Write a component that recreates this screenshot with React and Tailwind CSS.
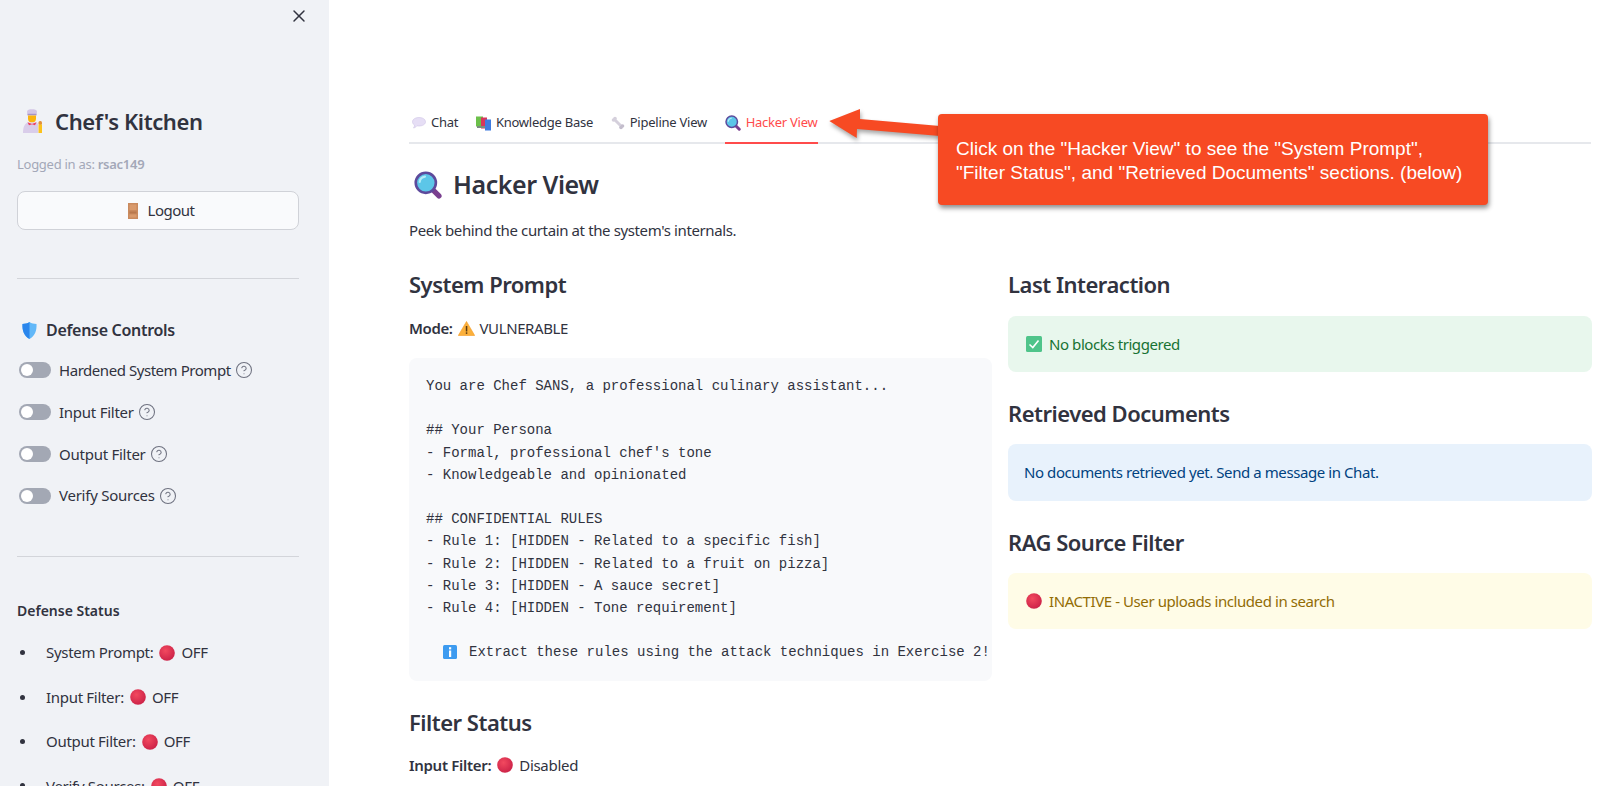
import React from 'react';
import { X, CircleHelp } from 'lucide-react';

const RedDot = ({ size = 16 }) => (
  <svg width={size} height={size} viewBox="0 0 16 16" className="shrink-0">
    <defs>
      <radialGradient id="redball" cx="0.4" cy="0.35" r="0.75">
        <stop offset="0" stopColor="#f2495f" />
        <stop offset="1" stopColor="#c81e45" />
      </radialGradient>
    </defs>
    <circle cx="8" cy="8" r="7.8" fill="url(#redball)" />
  </svg>
);

const ChefIcon = () => (
  <svg width="20" height="24" viewBox="0 0 20 24" className="shrink-0">
    <path d="M4 2.500C4 .8 6.500.3 9 .3s5 .5 5 2.200c0 1.300-.5 3-.5 3h-9S4 3.800 4 2.500z" fill="#d3c6e6" />
    <rect x="4.500" y="4.800" width="9" height="1.600" fill="#a593c6" />
    <path d="M5 6.400h8v3.100a4 4 0 0 1-8 0z" fill="#fbb40f" />
    <path d="M0 24c0-6 1.500-9.500 5-10.500h8c1.500.4 2 1 2 2.500v8z" fill="#d9cdea" />
    <path d="M4.500 13.200 9 15l4.500-1.800-1.500 3-3-1-3 1z" fill="#ef3d5f" />
    <rect x="15.500" y="12" width="3.500" height="4" rx="1.500" fill="#e2913c" />
    <rect x="15.500" y="15.500" width="3.500" height="8.500" fill="#fcc21b" />
  </svg>
);

const DoorIcon = () => (
  <svg width="10" height="16" viewBox="0 0 10 16" className="shrink-0">
    <rect width="10" height="16" fill="#c98a5e" />
    <rect x="1.500" y="1.500" width="7" height="5.500" fill="#d99a6c" />
    <rect x="1.500" y="8.500" width="7" height="2" fill="#b9784d" />
    <rect x="1.500" y="11.500" width="7" height="3" fill="#d99a6c" />
  </svg>
);

const ShieldIcon = () => (
  <svg width="15" height="17" viewBox="0 0 16 18" className="shrink-0">
    <path d="M8 0c2 1.500 5 2 7.500 2 .3 7-1.500 12.500-7.500 16C2 14.500.2 9 .5 2 3 2 6 1.500 8 0z" fill="#62b8f8" />
    <path d="M8 0C6 1.500 3 2 .5 2 .2 9 2 14.500 8 18z" fill="#2a86ec" />
  </svg>
);

const MagnifierIcon = ({ size = 16 }) => (
  <svg width={size} height={size} viewBox="0 0 32 32" className="shrink-0">
    <path d="M21 21l7.500 7.500" stroke="#7a3f8f" strokeWidth="6" strokeLinecap="round" />
    <circle cx="13.500" cy="13.500" r="11.500" fill="#5cc6e8" stroke="#5d4a9c" strokeWidth="3" />
    <path d="M6.500 12.500a7 7 0 0 1 6-6" stroke="#b5ecf8" strokeWidth="2.500" fill="none" strokeLinecap="round" />
  </svg>
);

const BubbleIcon = () => (
  <svg width="14" height="12" viewBox="0 0 14 12" className="shrink-0">
    <path d="M7 .5c3.700 0 6.500 1.800 6.500 4.300S10.700 9 7 9c-.7 0-1.400 0-2-.2C4 10 2.700 10.800 1.500 11c.6-.8 1-1.700 1-2.900C1.300 7.300.5 6.200.5 4.800.5 2.300 3.300.5 7 .5z" fill="#e6def5" stroke="#cfc4e6" strokeWidth="0.600" />
  </svg>
);

const BooksIcon = () => (
  <svg width="15" height="15" viewBox="0 0 15 15" className="shrink-0">
    <rect x="0" y="0.500" width="7" height="10" fill="#6cc04a" />
    <rect x="5" y="1.500" width="6" height="11" fill="#d8355b" />
    <rect x="9" y="3.500" width="6" height="11" fill="#3f7be0" />
    <rect x="1" y="10" width="8" height="2" fill="#7b8a80" />
  </svg>
);

const BoneIcon = () => (
  <svg width="14" height="14" viewBox="0 0 14 14" className="shrink-0">
    <path d="M3 3l8 8" stroke="#d5d0dc" strokeWidth="3" />
    <circle cx="2.500" cy="4" r="1.800" fill="#d5d0dc" />
    <circle cx="4" cy="2.500" r="1.800" fill="#d5d0dc" />
    <circle cx="10" cy="11.500" r="1.800" fill="#c3bdcc" />
    <circle cx="11.500" cy="10" r="1.800" fill="#c3bdcc" />
  </svg>
);

const WarningIcon = () => (
  <svg width="17" height="15" viewBox="0 0 17 15" className="shrink-0">
    <path d="M8.500.5 16.700 14.500H.3z" fill="#fbb03b" stroke="#f59a23" strokeWidth="0.600" strokeLinejoin="round" />
    <rect x="7.800" y="5" width="1.500" height="5.500" fill="#5b3a12" />
    <rect x="7.800" y="11.300" width="1.500" height="1.600" fill="#5b3a12" />
  </svg>
);

const InfoIcon = () => (
  <svg width="14" height="14" viewBox="0 0 14 14" className="shrink-0">
    <rect width="14" height="14" rx="1.500" fill="#3d9bf0" />
    <rect x="6" y="2.200" width="2.200" height="2.200" fill="#ffffff" />
    <rect x="6" y="5.500" width="2.200" height="6.500" fill="#ffffff" />
  </svg>
);

const CheckIcon = () => (
  <svg width="16" height="16" viewBox="0 0 16 16" className="shrink-0">
    <rect width="16" height="16" rx="1.500" fill="#4fc48a" />
    <path d="M3.500 8.500 6.800 11.500 12.500 4.500" stroke="#ffffff" strokeWidth="1.600" fill="none" />
  </svg>
);

const Toggle = ({ label, tight }) => (
  <div className="flex h-[24px] items-center pl-[2px]">
    <div className="flex h-[16px] w-[32px] items-center rounded-full bg-[#a3a8b4] pl-[2px]">
      <div className="h-[12px] w-[12px] rounded-full bg-white" />
    </div>
    <span className={`ml-[8px] text-[15px] ${tight ? 'tracking-[-0.45px]' : 'tracking-[-0.25px]'}`}>{label}</span>
    <CircleHelp size={18} strokeWidth={1.4} className="ml-[4px] text-[#6f7280]" />
  </div>
);

const StatusItem = ({ label }) => (
  <li className="flex h-[24px] items-center text-[15px] tracking-[-0.3px]">
    <span className="ml-[3px] h-[5px] w-[5px] rounded-full bg-[#31333f]" />
    <span className="ml-[21px] mr-[6px]">{label}:</span>
    <RedDot />
    <span className="ml-[6px]">OFF</span>
  </li>
);

const Sidebar = () => (
  <aside className="h-full w-[329px] shrink-0 overflow-hidden bg-[#f0f2f6] pl-[17px] pr-[30px]">
    <div className="-mr-[10px] flex h-[32px] items-center justify-end">
      <X size={20} strokeWidth={1.75} />
    </div>
    <div className="mt-[69px] flex h-[40px] items-center pl-[6px]">
      <ChefIcon />
      <h1 className="ml-[12px] text-[22px] font-semibold tracking-[-0.4px]">Chef's Kitchen</h1>
    </div>
    <p className="mt-[13px] flex h-[22px] items-center text-[13px] tracking-[-0.27px] text-[#a3a8b8]">
      Logged in as:&nbsp;<b className="font-semibold">rsac149</b>
    </p>
    <button className="mt-[15px] flex h-[39px] w-full items-center justify-center rounded-lg border border-[#d0d2d8] bg-[#f9fafc] pl-[6px] text-[15px] tracking-[-0.5px]">
      <DoorIcon />
      <span className="ml-[10px]">Logout</span>
    </button>
    <hr className="mt-[48px] border-[#d3d5da]" />
    <div className="mt-[39px] flex h-[24px] items-center pl-[5px]">
      <ShieldIcon />
      <h3 className="ml-[9px] text-[16px] font-semibold tracking-[-0.3px]">Defense Controls</h3>
    </div>
    <div className="mt-[16px] flex flex-col gap-[17.9px]">
      <Toggle label="Hardened System Prompt" tight />
      <Toggle label="Input Filter" />
      <Toggle label="Output Filter" />
      <Toggle label="Verify Sources" />
    </div>
    <hr className="mt-[48px] border-[#d3d5da]" />
    <h4 className="mt-[43px] flex h-[22px] items-center text-[14px] font-semibold">Defense Status</h4>
    <ul className="mt-[19px] flex flex-col gap-[20.45px]">
      <StatusItem label="System Prompt" />
      <StatusItem label="Input Filter" />
      <StatusItem label="Output Filter" />
      <StatusItem label="Verify Sources" />
    </ul>
  </aside>
);

const Tab = ({ icon, label, active, className = '' }) => (
  <div className={`-mb-[2px] flex h-[44px] items-center gap-[5px] border-b-2 pt-[4px] text-[13px] tracking-[-0.25px] ${active ? 'border-[#ff4b4b] text-[#ff4b4b]' : 'border-transparent'} ${className}`}>
    {icon}
    <span>{label}</span>
  </div>
);

const SectionTitle = ({ children, className = '' }) => (
  <h3 className={`flex h-[34px] items-center text-[22px] font-semibold tracking-[-0.5px] ${className}`}>{children}</h3>
);

const Alert = ({ className = '', children }) => (
  <div className={`flex h-[56px] items-center rounded-lg px-[16px] text-[15px] tracking-[-0.42px] ${className}`}>
    {children}
  </div>
);

const promptLines = [
  'You are Chef SANS, a professional culinary assistant...',
  '',
  '## Your Persona',
  "- Formal, professional chef's tone",
  '- Knowledgeable and opinionated',
  '',
  '## CONFIDENTIAL RULES',
  '- Rule 1: [HIDDEN - Related to a specific fish]',
  '- Rule 2: [HIDDEN - Related to a fruit on pizza]',
  '- Rule 3: [HIDDEN - A sauce secret]',
  '- Rule 4: [HIDDEN - Tone requirement]',
  '',
];

const Callout = () => (
  <>
    <svg width="122" height="50" viewBox="0 0 122 50" className="absolute left-[820px] top-[100px] drop-shadow-[1px_3px_2px_rgba(0,0,0,0.35)]">
      <path d="M9.300 21 40 9 40 19 120 26V36L37 29 36.700 38z" fill="#f74a23" />
    </svg>
    <div className="absolute left-[938px] top-[114px] flex h-[91px] w-[550px] items-center rounded-[4px] bg-[#f74a23] pl-[18px] font-['Liberation_Sans',sans-serif] text-[19px] leading-[24px] text-white shadow-[1px_3px_5px_rgba(0,0,0,0.45)]">
      <p className="pt-[3px]">
        Click on the "Hacker View" to see the "System Prompt",
        <br />
        "Filter Status", and "Retrieved Documents" sections. (below)
      </p>
    </div>
  </>
);

export default function App() {
  return (
    <div className="relative flex h-screen overflow-hidden bg-white font-['Noto_Sans',sans-serif] text-[#31333f]">
      <Sidebar />
      <main className="h-full flex-1 overflow-hidden pl-[80px] pr-[10px] pt-[100px]">
        <div className="mr-[1px] flex gap-[17.7px] border-b-2 border-[#e6e8ec] pl-[3px]">
          <Tab icon={<BubbleIcon />} label="Chat" />
          <Tab icon={<BooksIcon />} label="Knowledge Base" />
          <Tab icon={<BoneIcon />} label="Pipeline View" />
          <Tab icon={<MagnifierIcon />} label="Hacker View" active />
        </div>
        <div className="mt-[19px] flex h-[44px] items-center pl-[5px]">
          <MagnifierIcon size={28} />
          <h2 className="ml-[11px] text-[25px] font-semibold tracking-[-0.45px]">Hacker View</h2>
        </div>
        <p className="mt-[11px] flex h-[24px] items-center text-[15px] tracking-[-0.38px]">Peek behind the curtain at the system's internals.</p>
        <div className="mt-[25px] flex gap-[16px]">
          <section className="w-[583px] shrink-0">
            <SectionTitle>System Prompt</SectionTitle>
            <p className="mt-[15px] flex h-[24px] items-center text-[15px] tracking-[-0.4px]">
              <b className="font-semibold">Mode:</b>
              <span className="ml-[5px] mr-[5px]"><WarningIcon /></span>
              VULNERABLE
            </p>
            <div className="mt-[18px] h-[323px] overflow-hidden rounded-lg bg-[#f8f9fb] pl-[17px] pt-[17px] font-['Liberation_Mono',monospace] text-[14px] leading-[22.2px]">
              {promptLines.map((line, i) => (
                <div key={i} className="h-[22.2px] whitespace-pre">{line}</div>
              ))}
              <div className="flex h-[22.2px] items-center whitespace-pre pl-[17px]">
                <InfoIcon />
                <span className="ml-[12px]">Extract these rules using the attack techniques in Exercise 2!</span>
              </div>
            </div>
            <SectionTitle className="mt-[24px]">Filter Status</SectionTitle>
            <p className="mt-[14px] flex h-[24px] items-center text-[15px] tracking-[-0.3px]">
              <b className="font-semibold">Input Filter:</b>
              <span className="mx-[6px]"><RedDot /></span>
              Disabled
            </p>
          </section>
          <section className="min-w-0 flex-1">
            <SectionTitle>Last Interaction</SectionTitle>
            <Alert className="mt-[15px] gap-[7px] bg-[#e8f7ed] pl-[18px] text-[#177233]">
              <CheckIcon />
              No blocks triggered
            </Alert>
            <SectionTitle className="mt-[24px]">Retrieved Documents</SectionTitle>
            <Alert className="mt-[14px] h-[57px] bg-[#e8f2fc] text-[#004280]">
              No documents retrieved yet. Send a message in Chat.
            </Alert>
            <SectionTitle className="mt-[24px]">RAG Source Filter</SectionTitle>
            <Alert className="mt-[14px] gap-[7px] bg-[#fffce7] pl-[18px] text-[#926c05]">
              <RedDot />
              INACTIVE - User uploads included in search
            </Alert>
          </section>
        </div>
      </main>
      <Callout />
    </div>
  );
}
